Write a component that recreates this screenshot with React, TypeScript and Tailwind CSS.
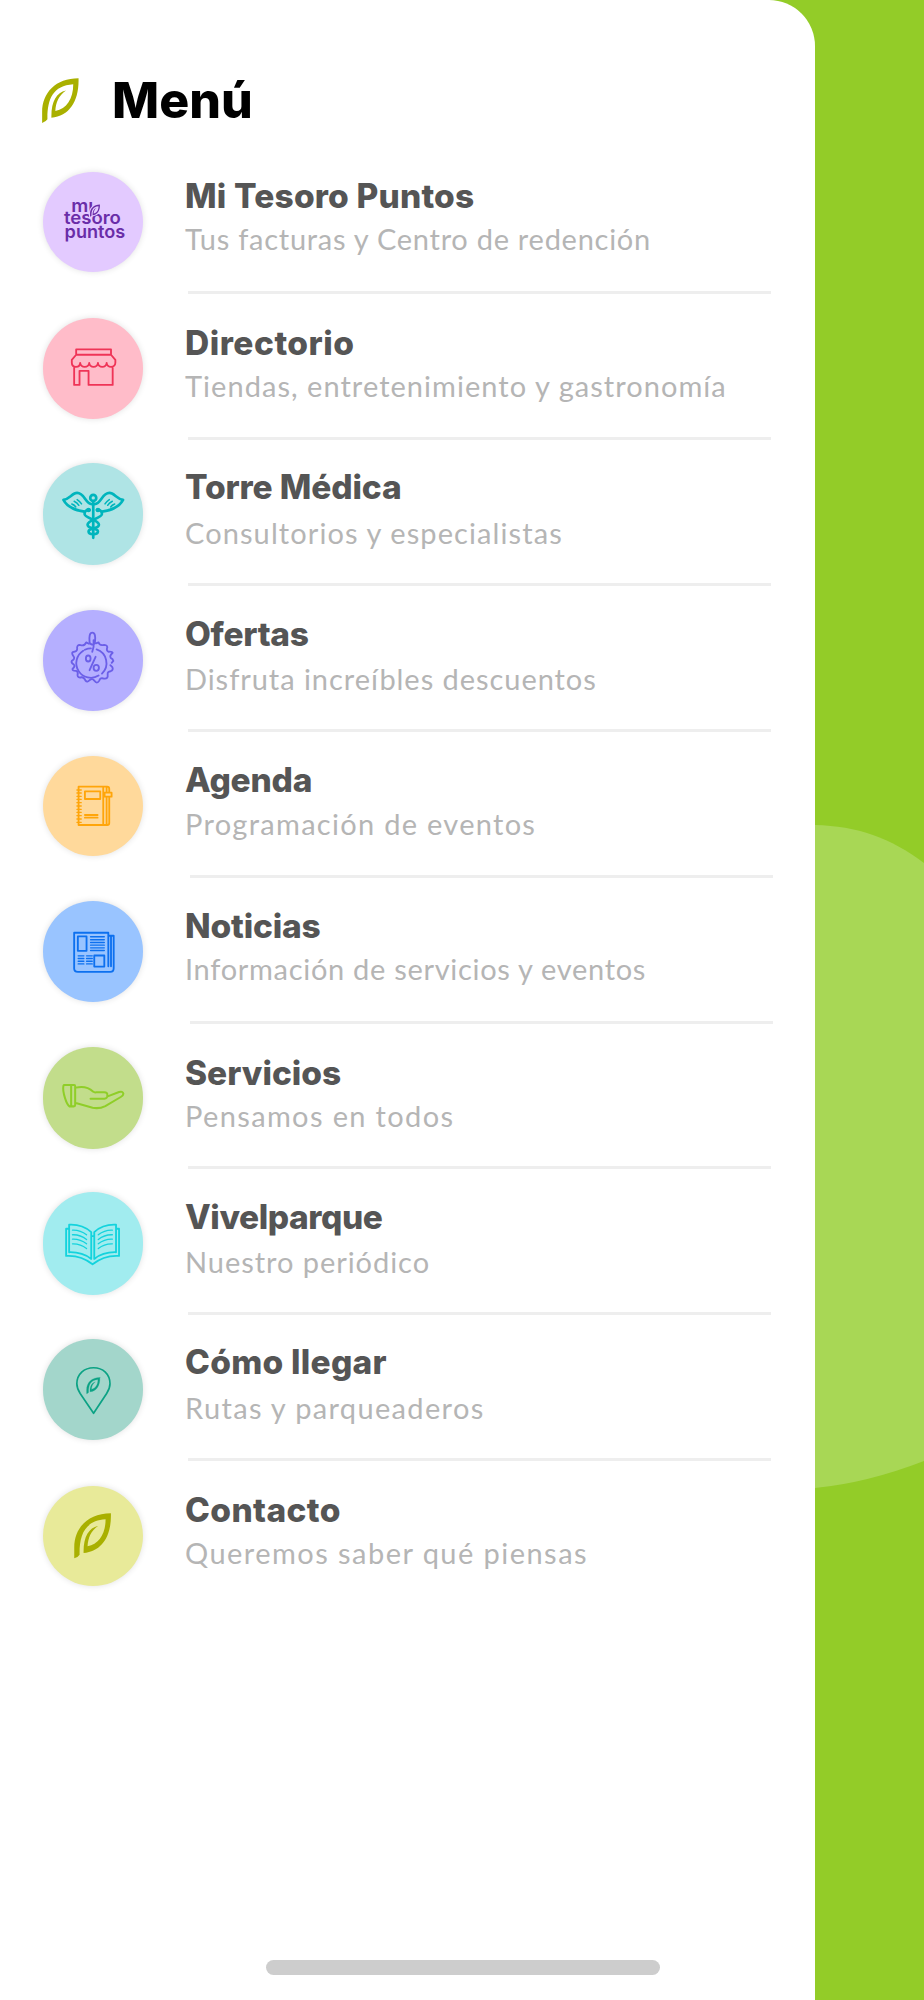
import React from 'react';
import clsx from 'clsx';

interface MenuItem {
  title: string;
  description: string;
  circle: string;
  titleClass: string;
  descriptionClass: string;
  dividerClass?: string;
  icon: React.ReactNode;
}

const LEAF_PATH =
  'M241 114C172 114 131 158 131 216V249Q142 246 147 238C146 180 162 136 225 132C225 176 205 206 171 213C172 188 181 166 203 151C174 158 158 184 159 233C214 228 243 183 241 114Z';

const LeafIcon: React.FC<{ className?: string }> = ({ className }) => (
  <svg viewBox="131 113 111 136" className={className} fill="currentColor">
    <path d={LEAF_PATH} />
  </svg>
);

const Glyph: React.FC<{ viewBox: string; width?: number; children: React.ReactNode }> = ({ viewBox, width = 5.5, children }) => (
  <svg
    viewBox={viewBox}
    className="w-full h-full"
    fill="none"
    stroke="currentColor"
    strokeWidth={width}
    strokeLinecap="round"
    strokeLinejoin="round"
  >
    {children}
  </svg>
);

const PointsLogo = () => (
  <svg viewBox="129 367 300 300" className="w-full h-full font-['Inter'] font-semibold" fill="currentColor">
    <text fontSize="54">
      <tspan x="213" y="486" textLength="66" lengthAdjust="spacingAndGlyphs">mı</tspan>
      <tspan x="191" y="524" textLength="171" lengthAdjust="spacingAndGlyphs">tesoro</tspan>
      <tspan x="193" y="566" textLength="182" lengthAdjust="spacingAndGlyphs">puntos</tspan>
    </text>
    <path d={LEAF_PATH} transform="translate(234 434) scale(.27)" stroke="#e3caff" strokeWidth="26" />
    <path d={LEAF_PATH} transform="translate(234 434) scale(.27)" />
  </svg>
);

const StoreIcon = () => (
  <Glyph viewBox="38 25 300 300">
    <path d="M137 118H241V134H137ZM137 134L124 149V158C124 174 149 174 149 158C149 174 176 174 176 158C176 174 202 174 202 158C202 174 228 174 228 158C228 174 254 174 254 158V149L241 134M131 172V224H147V182H174V224H246V172" />
  </Glyph>
);

const CaduceusIcon = () => (
  <Glyph viewBox="38 27 300 300" width={8}>
    <circle cx="188" cy="129" r="9" />
    <path d="M188 139V248M184 148C176 147 171 142 164 132C155 119 145 110 132 116C121 121 114 133 99 135C105 146 114 154 125 159C137 166 149 168 162 170M192 148C200 147 205 142 212 132C221 119 231 110 244 116C255 121 262 133 277 135C271 146 262 154 251 159C239 166 227 168 214 170" />
    <path d="M177 165C168 163 162 169 162 177C163 190 205 194 205 209C205 222 174 218 174 229C174 236 184 237 188 237C192 237 202 236 202 229C202 218 171 222 171 209C171 194 213 190 214 177C214 169 208 163 199 165" />
    <circle cx="174" cy="165" r="3" />
    <circle cx="202" cy="165" r="3" />
    <path strokeWidth="4.5" d="M131 139Q141 144 145 151M140 134Q149 140 153 147M124 147Q132 150 136 156M245 139Q235 144 231 151M236 134Q227 140 223 147M252 147Q244 150 240 156" />
  </Glyph>
);

const OfferIcon = () => (
  <Glyph viewBox="38 30 300 300">
    <path d="M175 130L167 126Q162 138 150 134Q138 132 140 146Q140 154 127 155Q122 158 130 169Q134 175 124 181Q121 187 130 192Q135 198 126 205Q126 212 137 211Q144 213 141 224Q142 233 153 230Q160 229 165 240Q170 247 178 238Q185 232 191 240Q199 252 206 240Q209 230 220 234Q233 236 231 222Q230 213 240 212Q249 209 245 200L239 194M243 187L248 181Q247 175 240 172Q236 166 246 157Q245 153 234 154Q226 151 230 140Q229 132 216 134Q206 135 204 126L196 129" />
    <path d="M158 151A43 43 0 0 0 204 225M214 219A43 43 0 0 0 198 147M163 148Q172 144 181 144" />
    <path d="M177 127Q174 97 185 97Q197 97 193 127Q190 136 181 131ZM189 119V139L185 154M195 169L177 209" />
    <ellipse cx="173" cy="174" rx="7" ry="9" />
    <ellipse cx="197" cy="202" rx="8" ry="9" />
  </Glyph>
);

const NotebookIcon = () => (
  <Glyph viewBox="38 30 300 300">
    <path d="M236 138V129Q236 122 230 122H144V237H230Q236 237 236 231V154M218 122V237M228 123V138M228 154V236M163 136H209V159H163ZM163 207H201M163 215H201M222 140H243V152H222Z" />
    <path strokeWidth="4" d="M139 132H152M139 141H152M139 151H152M139 160H152M139 170H152M139 180H152M139 190H152M139 199H152M139 209H152M139 219H152M139 229H152" />
  </Glyph>
);

const NewsIcon = () => (
  <Glyph viewBox="38 28 300 300">
    <path d="M131 122H233V222M131 122V229Q131 239 142 239H239Q249 239 249 228V131H235M241 132V222M142 133H168V176H142ZM191 190H221V223H191Z" />
    <path strokeWidth="4" d="M180 134H221M180 143H221M180 151H221M180 159H221M180 167H221M180 175H221M143 191H160M143 199H160M143 207H160M143 215H160M168 191H185M168 199H185M168 207H185M168 215H185" />
  </Glyph>
);

const HandIcon = () => (
  <Glyph viewBox="38 29 300 300" width={6}>
    <path d="M101 140H131Q134 140 134 144V200Q134 204 130 204H117Q110 199 104 180Q96 155 99 142Q100 140 101 140ZM122 141V203M136 148C160 142 176 149 188 160Q191 163 197 162H221Q231 162 230 171Q231 180 221 181H180M231 174L265 161Q276 158 278 166Q278 171 270 176L224 203Q206 212 186 208L136 194" />
  </Glyph>
);

const BookIcon = () => (
  <Glyph viewBox="38 28 300 300">
    <path d="M116 122Q155 120 182 144V224Q155 203 116 204ZM256 122Q217 120 191 144V224Q217 203 256 204ZM116 134H107V215Q151 212 186 240Q221 212 265 215V134H256M183 156H190" />
    <path strokeWidth="4" d="M126 138Q149 137 168 152M126 152Q149 151 168 166M126 165Q149 164 168 179M126 179Q149 178 168 193M245 138Q222 137 203 152M245 152Q222 151 203 166M245 165Q222 164 203 179M245 179Q222 178 203 193" />
  </Glyph>
);

const PinIcon = () => (
  <Glyph viewBox="39 28 300 300" width={5}>
    <path d="M190 249L150 190C143 179 140 172 140 161C140 132 162 113 190 113C218 113 239 132 239 161C239 172 236 179 229 190Z" />
    <path d={LEAF_PATH} transform="translate(122 101) scale(.36)" fill="currentColor" strokeWidth="2" />
  </Glyph>
);

const ContactIcon = () => (
  <svg viewBox="38 32 300 300" className="w-full h-full" fill="currentColor">
    <path d={LEAF_PATH} />
  </svg>
);

const MENU_ITEMS: MenuItem[] = [
  {
    title: 'Mi Tesoro Puntos',
    description: 'Tus facturas y Centro de redención',
    circle: 'mt-6 h-[100px] bg-[#e3caff] text-[#6a2da8]',
    titleClass: 'tracking-[0.18px]',
    descriptionClass: 'mt-[3px] tracking-[0.74px]',
    icon: <PointsLogo />,
  },
  {
    title: 'Directorio',
    description: 'Tiendas, entretenimiento y gastronomía',
    circle: 'mt-6 h-[101px] bg-[#ffbcc9] text-[#ef3457]',
    titleClass: 'mt-px tracking-[0.5px]',
    descriptionClass: 'mt-[3px] tracking-[1.04px]',
    icon: <StoreIcon />,
  },
  {
    title: 'Torre Médica',
    description: 'Consultorios y especialistas',
    circle: 'mt-[23px] h-[102px] bg-[#afe4e5] text-[#00b5bd]',
    titleClass: '-mt-px tracking-[-0.13px]',
    descriptionClass: 'mt-[6px] tracking-[1.09px]',
    icon: <CaduceusIcon />,
  },
  {
    title: 'Ofertas',
    description: 'Disfruta increíbles descuentos',
    circle: 'mt-6 h-[101px] bg-[#b5afff] text-[#6b5fe8]',
    titleClass: 'tracking-[-0.3px]',
    descriptionClass: 'mt-[5px] tracking-[0.95px]',
    icon: <OfferIcon />,
  },
  {
    title: 'Agenda',
    description: 'Programación de eventos',
    circle: 'mt-6 h-[100px] bg-[#ffd99b] text-[#ffa50a]',
    titleClass: 'tracking-[-0.25px]',
    descriptionClass: 'mt-1 tracking-[1.29px]',
    dividerClass: 'translate-x-0.5',
    icon: <NotebookIcon />,
  },
  {
    title: 'Noticias',
    description: 'Información de servicios y eventos',
    circle: 'mt-[23px] h-[101px] bg-[#99c4ff] text-[#0d70ef]',
    titleClass: 'tracking-[-0.18px]',
    descriptionClass: 'mt-[3px] tracking-[0.7px]',
    dividerClass: 'translate-x-0.5',
    icon: <NewsIcon />,
  },
  {
    title: 'Servicios',
    description: 'Pensamos en todos',
    circle: 'mt-[23px] h-[102px] bg-[#c2dd8b] text-[#8fce28]',
    titleClass: 'mt-px tracking-normal',
    descriptionClass: 'mt-[3px] tracking-[1.36px]',
    dividerClass: 'mb-px',
    icon: <HandIcon />,
  },
  {
    title: 'Vivelparque',
    description: 'Nuestro periódico',
    circle: 'mt-[22px] h-[103px] bg-[#a1ecef] text-[#14d3dd]',
    titleClass: '-mt-px tracking-[-0.43px]',
    descriptionClass: 'mt-[5px] tracking-[0.95px]',
    dividerClass: 'mb-px',
    icon: <BookIcon />,
  },
  {
    title: 'Cómo llegar',
    description: 'Rutas y parqueaderos',
    circle: 'mt-[23px] h-[101px] bg-[#a3d6cb] text-[#0ba284]',
    titleClass: '-mt-0.5 tracking-[0.25px]',
    descriptionClass: 'mt-[6px] tracking-[1.34px]',
    dividerClass: 'mb-px',
    icon: <PinIcon />,
  },
  {
    title: 'Contacto',
    description: 'Queremos saber qué piensas',
    circle: 'mt-6 h-[100px] bg-[#e8ea99] text-[#a9b000]',
    titleClass: 'tracking-[0.38px]',
    descriptionClass: 'mt-[3px] tracking-[1.45px]',
    dividerClass: 'invisible',
    icon: <ContactIcon />,
  },
];

const MenuRow: React.FC<{ item: MenuItem }> = ({ item }) => (
  <li className="flex h-[146px] gap-[42px] pl-[42.5px]">
    <div className={clsx('w-[100.5px] shrink-0 rounded-full shadow-[0_0_6px_rgba(0,0,0,0.12)]', item.circle)}>
      {item.icon}
    </div>
    <div className="flex flex-col w-[590px] h-full whitespace-nowrap pt-7">
      <h2 className={clsx('font-extrabold text-[33.5px] leading-10 text-[#555]', item.titleClass)}>{item.title}</h2>
      <p className={clsx("font-['Lato'] text-[29px] leading-10 text-[#b5b5b5]", item.descriptionClass)}>{item.description}</p>
      <div className={clsx('mt-auto ml-[3px] h-[3px] w-[583px] shrink-0 bg-[#eee]', item.dividerClass)} />
    </div>
  </li>
);

const App: React.FC = () => {
  return (
    <div className="grid w-[924px] h-[2000px] overflow-hidden bg-[#93cc28] font-['Inter',sans-serif]">
      <svg viewBox="0 0 109 664" className="col-start-1 row-start-1 w-[109px] h-[664px] mt-[825px] justify-self-end text-[#a8d755]" fill="currentColor">
        <path d="M0 0C42 1 76 13 109 38V636Q52 658 0 663Z" />
      </svg>
      <div className="col-start-1 row-start-1 flex flex-col w-[814.5px] h-full rounded-tr-[46px] bg-white">
        <header className="flex items-center h-[148px] pl-[42px] gap-[33px] pt-[54px] pb-px">
          <LeafIcon className="w-[37px] h-[45px] text-[#a9b000]" />
          <h1 className="-mt-px text-[50px] leading-none font-extrabold text-black">Menú</h1>
        </header>
        <ul>
          {MENU_ITEMS.map(item => (
            <MenuRow key={item.title} item={item} />
          ))}
        </ul>
        <div className="mt-auto mb-[25px] ml-[266px] w-[394px] h-[15px] rounded-full bg-[#cdcdcd]" />
      </div>
    </div>
  );
};

export default App;
